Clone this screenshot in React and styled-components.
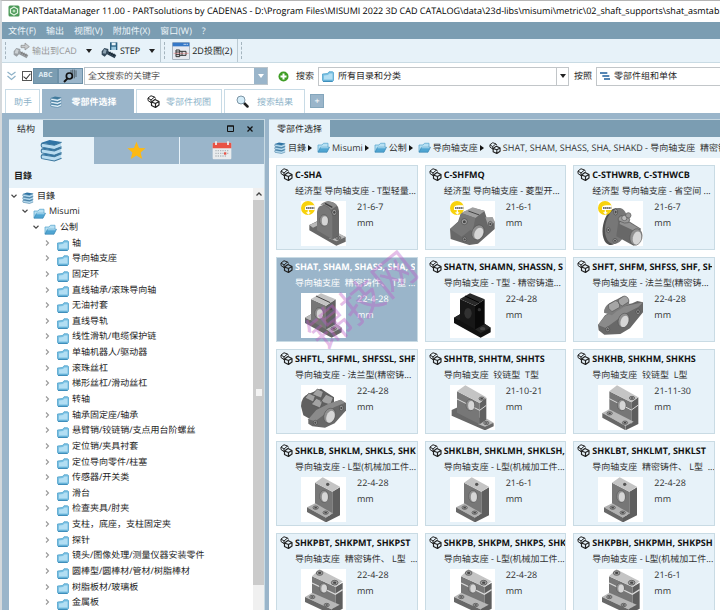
import React from 'react';
import styled, { createGlobalStyle, css } from 'styled-components';

const c = {
  bar: '#7b9db2',
  frame: '#9ab5ca',
  pale: '#e7f2f9',
  line: '#c9dbe4',
  ink: '#1d1d1d',
  tab: '#8db3c9',
};

const Global = createGlobalStyle`
  * { box-sizing: border-box; }
  html, body { margin: 0; padding: 0; overflow: hidden; }
  body { text-rendering: geometricPrecision; }
  body, button, input, select {
    font-family: "Open Sans", "Noto Sans CJK SC", sans-serif;
    font-size: 9px;
    line-height: 12px;
    color: ${c.ink};
    text-rendering: geometricPrecision;
  }
  button { border: 0; padding: 0; margin: 0; background: none; cursor: pointer; white-space: nowrap; }
  svg { display: block; flex: none; }
`;

/* ---------- icons ---------- */

const Cubes = ({ size = 13, color = '#222' }) => (
  <svg width={size} height={size} viewBox="0 0 26 26" fill="none" stroke={color} strokeWidth="2" strokeLinejoin="round">
    <path d="M9 16 L2 11 V6 L8 1.500 L15 4 L17 7 M2 6 L8 10 L15 4 M8 10 V15" />
    <path d="M16 9 L24 13 V20 L17 25 L9 21 V14 Z M9 14 L17 17 L24 13 M17 17 V25" strokeWidth="2.400" />
  </svg>
);

const Books = ({ size = 12, light = false }) => (
  <svg width={size} height={size} viewBox="0 0 24 24">
    {[12, 6, 0].map((y) => (
      <g key={y} transform={`translate(0 ${y})`}>
        <path d="M2 4.500 L15 6.500 L22 3.500 L22 8 L15 11 L2 8.500 Z" fill={light ? '#e2f0f8' : '#b9dcf0'} />
        <path d="M1.500 4 L10 1 L22.500 3 L15 6.500 Z" fill={light ? '#40799b' : '#2f74a5'} />
        <path d="M22.500 3.500 L15 6.500 L2 4.500 Q0.500 6.500 2 8.500 L15 11 L22.500 8" fill="none" stroke="#39759c" strokeWidth="1.100" />
      </g>
    ))}
  </svg>
);

const Folder = () => (
  <svg width="12" height="11" viewBox="0 0 24 22">
    <path d="M1 6 L11 5 L14 1.500 H21 L23 3 V19 L21 21 H2.500 L1 19 Z" fill="#79c1e3" stroke="#4c9fca" strokeWidth="1.500" />
    <path d="M4 9 L12 8 L15 5 H21 V17 H4 Z" fill="#b2def3" />
    <path d="M2 20.500 H21" stroke="#3284b3" strokeWidth="2" />
  </svg>
);

const OpenFolder = () => (
  <svg width="13" height="11" viewBox="0 0 26 22">
    <path d="M2 20 V6 H10 L13 2.500 H22 V10" fill="#b7e0f3" stroke="#5aa7cf" strokeWidth="1.500" />
    <path d="M2 20.500 L7 10.500 H25 L20 20.500 Z" fill="#4fa5d2" stroke="#2d7dad" strokeWidth="1.200" />
    <path d="M7 11.500 H23" stroke="#a9daf1" strokeWidth="2" fill="none" />
  </svg>
);

const Chevron = ({ open }) => (
  <svg width="6" height="6" viewBox="0 0 12 12" fill="none" strokeWidth="2.200" stroke={open ? '#444' : '#999'}>
    <path d={open ? 'M1 3.500 L6 8.500 L11 3.500' : 'M4 1 L9 6 L4 11'} />
  </svg>
);

const Caret = ({ color = '#222' }) => (
  <svg width="6" height="4" viewBox="0 0 6 4"><path d="M0 0 H6 L3 4 Z" fill={color} /></svg>
);

const CaretRight = () => (
  <svg width="4" height="6" viewBox="0 0 4 6"><path d="M0 0 L4 3 L0 6 Z" fill="#111" /></svg>
);

const AppLogo = () => (
  <svg width="12" height="12" viewBox="0 0 24 24">
    <rect x="1" y="1" width="22" height="22" rx="3" fill="#4c9a59" />
    <path d="M12 4 L19 8 V16 L12 20 L5 16 V8 Z" fill="none" stroke="#e5f4e4" strokeWidth="2.500" />
    <circle cx="12" cy="12" r="3" fill="#b9dfba" />
  </svg>
);

const Screw = ({ dark, children }) => (
  <svg width="17" height="17" viewBox="0 0 51 51">
    <path d="M2 28 L10 18 L22 21 L22 28 L46 39 L41 49 L18 37 L11 44 L2 38 Z" fill={dark ? '#34495a' : '#9a9fa3'} />
    <path d="M9 21 L17 24 L14 35 L5 34 Z" fill={dark ? '#8ba1b0' : '#ccd1d4'} />
    <path d="M22 30 L43 41 M28 29 L24 38 M34 32 L30 41 M40 35 L36 44" stroke={dark ? '#10202b' : '#777'} strokeWidth="2" />
    {children}
  </svg>
);

const ProjectionIcon = () => (
  <svg width="18" height="18" viewBox="0 0 54 54">
    <rect x="2" y="2" width="50" height="50" fill="#e6e9f0" stroke="#8b98a8" strokeWidth="2" />
    <rect x="2" y="2" width="50" height="11" fill="#3578c8" />
    <path d="M35 7 H47" stroke="#fff" strokeWidth="3" strokeDasharray="3 2" />
    <g fill="none" stroke="#333" strokeWidth="3">
      <path d="M12 24 H23 V44 H12 Z M12 30 H23 M12 38 H23 M23 28 H42 V40 H23 M30 28 V40" />
    </g>
    <path d="M5 34 H50" stroke="#d66" strokeWidth="1.500" />
  </svg>
);

const ShapeSearch = () => (
  <svg width="15" height="14" viewBox="0 0 45 42">
    <path d="M24 3 V28 M29 2 V28 M34 2 V28 M39 4 V24" stroke="#53636d" strokeWidth="3" />
    <circle cx="19" cy="21" r="9" fill="#9ab5ca" stroke="#111" strokeWidth="5" />
    <path d="M13 29 L3 39" stroke="#111" strokeWidth="6" />
  </svg>
);

const PlusBadge = () => (
  <svg width="11" height="11" viewBox="0 0 22 22">
    <circle cx="11" cy="11" r="10" fill="#3f9d25" /><path d="M11 5 V17 M5 11 H17" stroke="#fff" strokeWidth="4" />
  </svg>
);

const Magnifier = () => (
  <svg width="13" height="13" viewBox="0 0 26 26">
    <path d="M15 15 L23 23" stroke="#222" strokeWidth="5" strokeLinecap="round" />
    <circle cx="10" cy="10" r="8" fill="#d5edf9" stroke="#7d95a5" strokeWidth="2" />
  </svg>
);

const DoubleChevron = () => (
  <svg width="9" height="10" viewBox="0 0 18 20" fill="none" stroke="#8fb2c8" strokeWidth="2.500">
    <path d="M1 2 L9 8 L17 2 M1 10 L9 17 L17 10" />
  </svg>
);

const Levels = () => (
  <svg width="10" height="8" viewBox="0 0 30 24" stroke="#1f5f9c" strokeWidth="4">
    <path d="M0 3 H22 M7 12 H28 M12 21 H30" />
  </svg>
);

const Star = () => (
  <svg width="19" height="19" viewBox="0 0 24 24">
    <path d="M12 1 L15.200 8.800 L23.500 9.300 L17.200 14.600 L19.200 22.800 L12 18.300 L4.800 22.800 L6.800 14.600 L0.500 9.300 L8.800 8.800 Z" fill="#fdb913" />
  </svg>
);

const Calendar = () => (
  <svg width="20" height="19" viewBox="0 0 60 57">
    <rect x="2" y="5" width="56" height="50" rx="3" fill="#e9ecee" />
    <path d="M2 22 V8 Q2 5 5 5 H55 Q58 5 58 8 V22 Z" fill="#e85245" />
    <path d="M12 1 V12 M48 1 V12" stroke="#f1f3f4" strokeWidth="5" />
    <path d="M10 29 H51 M10 37 H51 M10 45 H45" stroke="#b4babf" strokeWidth="4" strokeDasharray="4 3" />
    <rect x="36" y="34" width="7" height="7" fill="#e85245" />
  </svg>
);

/* ---------- part drawings ---------- */

const L = '#b9b9b9';
const M = '#8a8a8a';
const D = '#686868';
const Bore = ({ x, y, rx = 13, ry = 17, r = 0 }) => (
  <g transform={`rotate(${r} ${x} ${y})`}>
    <ellipse cx={x} cy={y} rx={rx} ry={ry} fill="#8f8f8f" stroke="#4e4e4e" strokeWidth="1.500" />
    <ellipse cx={x + rx * 0.2} cy={y + ry * 0.1} rx={rx * 0.7} ry={ry * 0.8} fill="#d6d6d6" />
  </g>
);
const Dot = ({ x, y, rx = 8, ry = 5 }) => (
  <g>
    <ellipse cx={x} cy={y} rx={rx} ry={ry} fill="#a4a4a4" stroke="#454545" strokeWidth="2" />
    <ellipse cx={x} cy={y} rx={rx / 2} ry={ry / 2} fill="#484848" />
  </g>
);

const shapes = {
  round: (
    <g>
      <path d="M25 72 L48 61 L112 98 L134 108 V122 L106 134 L25 88 Z" fill={D} />
      <path d="M25 72 L48 62 L60 68 L36 80 Z M84 112 L114 97 L134 108 L106 121 Z" fill={L} />
      <path d="M62 18 Q70 2 82 1 Q112 4 114 30 V104 L94 116 L78 106 Z" fill={D} />
      <path d="M48 88 V32 Q52 9 72 14 Q93 25 94 47 V115 Z" fill="#777" />
      <path d="M58 12 Q68 1 82 1 Q100 2 108 14 L90 26 Q76 8 58 12 Z" fill={M} />
      <path d="M72 7 L94 19" stroke="#3d3d3d" strokeWidth="4" />
      <Bore x={69} y={58} /><Dot x={100} y={34} rx={7} ry={9} /><Dot x={112} y={111} />
    </g>
  ),
  tee: (dark) => (
    <g>
      <path d="M12 74 L30 64 L104 92 L122 104 V118 L92 134 L12 90 Z" fill={dark ? '#111' : '#666'} />
      <path d="M12 74 L30 64 L44 72 L27 82 Z M75 109 L104 92 L122 104 L92 120 Z" fill={dark ? '#262626' : L} />
      <path d="M30 18 L75 38 V109 L30 83 Z" fill={dark ? '#171717' : '#777'} />
      <path d="M75 38 L104 19 V93 L75 109 Z" fill={dark ? '#090909' : '#616161'} />
      <path d="M30 18 L60 1 L104 19 L75 38 Z" fill={dark ? '#292929' : '#c3c3c3'} />
      <path d="M45 9 L88 29" stroke={dark ? '#000' : '#444'} strokeWidth="3" />
      {dark ? (
        <g><ellipse cx="54" cy="61" rx="11" ry="16" fill="#313131" /><ellipse cx="98" cy="107" rx="8" ry="5" fill="#444" /><circle cx="88" cy="50" r="5" fill="#333" /></g>
      ) : (
        <g><Bore x={54} y={61} /><Dot x={98} y={107} /><circle cx="89" cy="47" r="5" fill="#4d4d4d" /></g>
      )}
    </g>
  ),
  flangeBlock: (
    <g>
      <path d="M0 84 L24 62 L33 36 L70 21 L103 29 L110 50 L134 62 V84 L84 128 L58 132 L2 114 Z" fill={D} />
      <path d="M0 84 L24 63 L62 86 L35 107 Z" fill="#777" />
      <path d="M33 36 L68 19 L104 30 L76 51 Z M106 49 L128 48 L135 64 L115 76 Z" fill="#a0a0a0" />
      <path d="M33 36 L76 51 L68 91 L25 67 Z" fill="#777" /><path d="M55 30 L88 42" stroke="#444" strokeWidth="3" />
      <Bore x={84} y={94} rx={18} ry={23} r={25} /><Dot x={43} y={62} rx={9} ry={9} /><Dot x={44} y={115} rx={6} ry={7} /><Dot x={121} y={69} rx={6} ry={8} />
    </g>
  ),
  tube: (
    <g>
      <ellipse cx="46" cy="77" rx="31" ry="56" fill="#505050" transform="rotate(12 46 77)" />
      <ellipse cx="55" cy="75" rx="33" ry="55" fill="#777" transform="rotate(12 55 75)" />
      <Dot x={53} y={33} rx={6} ry={9} /><Dot x={31} y={87} rx={5} ry={8} /><Dot x={51} y={119} rx={6} ry={7} />
      <path d="M61 61 Q68 45 86 56 L129 83 L107 134 L55 106 Z" fill={D} />
      <path d="M66 63 Q75 52 86 60 L126 84 L116 93 L65 69 Z" fill="#929292" />
      <Bore x={114} y={108} rx={18} ry={25} r={12} />
      <path d="M61 59 Q59 45 73 44 L92 49 Q99 56 91 65 L79 66 Z" fill="#999" stroke="#555" strokeWidth="2" />
      <circle cx="79" cy="51" r="8" fill="#bbb" stroke="#555" strokeWidth="2" /><circle cx="91" cy="43" r="8" fill="#999" stroke="#555" strokeWidth="2" />
    </g>
  ),
  flange: (
    <g>
      <path d="M0 96 L21 67 L66 40 L103 31 L118 24 L137 28 V55 L96 106 L67 123 L19 125 L2 112 Z" fill={D} />
      <path d="M0 96 L22 68 L67 43 L135 28 L121 42 L84 61 L23 105 Z" fill={M} />
      <path d="M18 59 Q17 42 34 31 L74 10 Q94 11 94 32 L56 55 L42 67 Z" fill="#7c7c7c" />
      <path d="M31 35 L52 23 Q66 24 65 43 L42 56 Q28 48 31 35 Z M61 20 L78 9 Q92 10 93 26 L73 39 Q59 34 61 20 Z" fill="#a5a5a5" stroke="#555" strokeWidth="2" />
      <Bore x={77} y={82} rx={16} ry={22} r={20} /><Dot x={29} y={109} rx={6} ry={7} /><Dot x={120} y={56} rx={6} ry={8} />
    </g>
  ),
  doubleFlange: (
    <g>
      <path d="M0 64 Q1 34 22 27 L60 11 L99 37 V92 L43 111 L7 91 Z" fill="#606060" />
      <g fill="#a2a2a2" stroke="#505050" strokeWidth="2">
        <path d="M12 39 L23 25 L43 32 L37 51 Z M33 29 L49 12 L67 20 L61 39 Z M31 58 L46 40 L65 49 L57 69 Z M59 50 L75 28 L97 38 L88 60 Z" />
      </g>
      <path d="M22 103 L45 76 L82 57 L119 44 L136 55 V75 L101 115 L72 128 L34 124 L22 116 Z" fill={D} />
      <path d="M22 103 L46 75 L83 56 L120 44 L132 53 L99 67 L43 109 Z" fill={M} />
      <Bore x={86} y={92} rx={17} ry={23} r={20} /><Dot x={43} y={113} rx={6} ry={7} /><Dot x={121} y={69} rx={6} ry={8} />
    </g>
  ),
  hingeTee: (
    <g>
      <path d="M5 75 L23 67 L108 107 L131 115 V124 L105 136 L5 92 Z" fill={D} />
      <path d="M84 117 L111 101 L131 113 L105 125 Z" fill={L} />
      <path d="M21 19 L89 54 V118 L21 83 Z" fill="#777" /><path d="M89 54 L109 38 V104 L89 118 Z" fill="#616161" />
      <path d="M21 19 L46 1 L109 37 L89 54 Z" fill="#c4c4c4" />
      <path d="M21 42 L89 76 L109 61" stroke="#dadada" fill="none" strokeWidth="3" />
      <Bore x={61} y={60} /><Dot x={95} y={41} /><Dot x={109} y={114} />
    </g>
  ),
  hingeL: (
    <g>
      <path d="M34 19 L100 52 V124 L34 86 Z" fill="#777" /><path d="M100 52 L121 37 V117 L84 135 V107 L100 116 Z" fill="#5e5e5e" />
      <path d="M34 19 L57 1 L121 37 L100 52 Z" fill="#c4c4c4" />
      <path d="M34 41 L100 75 L121 60" stroke="#dadada" fill="none" strokeWidth="3" />
      <path d="M13 84 L34 73 L107 110 L83 123 Z" fill={L} /><path d="M13 84 L83 123 V136 L13 98 Z" fill={D} />
      <Bore x={71} y={60} /><Dot x={102} y={39} /><Dot x={35} y={85} /><Dot x={81} y={113} />
    </g>
  ),
  ell: (
    <g>
      <path d="M42 17 L94 44 V116 L42 86 Z" fill="#777" /><path d="M94 44 L117 31 V115 L75 136 V120 L94 111 Z" fill="#5e5e5e" />
      <path d="M42 17 L65 1 L117 29 L94 44 Z" fill="#c4c4c4" />
      <path d="M18 91 L43 79 L95 109 L75 122 Z" fill="#b1b1b1" /><path d="M18 91 L75 122 V136 L18 105 Z" fill={D} />
      <Bore x={69} y={58} rx={13} ry={18} /><circle cx="80" cy="22" r="5" fill="#555" /><Dot x={44} y={92} /><Dot x={74} y={107} />
    </g>
  ),
  clamp: (
    <g>
      <path d="M33 22 L104 54 V124 L33 85 Z" fill="#777" /><path d="M104 54 L125 41 V119 L91 137 V120 L104 114 Z" fill="#5e5e5e" />
      <path d="M33 22 L55 1 L125 37 L104 54 Z" fill="#c4c4c4" />
      <path d="M33 42 L103 76 L125 62" stroke="#dadada" fill="none" strokeWidth="4" />
      <path d="M12 84 L34 71 L116 107 L91 121 Z" fill="#b7b7b7" /><path d="M12 84 L91 121 V136 L12 99 Z" fill={D} />
      <Bore x={67} y={57} rx={12} ry={15} /><Dot x={56} y={12} rx={10} ry={7} /><Dot x={101} y={41} rx={10} ry={7} /><Dot x={34} y={84} /><Dot x={77} y={108} />
    </g>
  ),
};

const PartPicture = ({ kind, economy }) => (
  <svg width="45" height="45" viewBox="0 0 135 135">
    <rect width="135" height="135" fill="#fff" />
    {kind === 'tee' ? shapes.tee(false) : kind === 'darkTee' ? shapes.tee(true) : shapes[kind]}
    {economy && (
      <g>
        <circle cx="21" cy="21" r="21" fill="#f8d20c" />
        <path d="M12 21 Q12 13 25 13 H41 V27 H12 Z" fill="#fff" />
        <path d="M15 21 H40" stroke="#777" strokeWidth="6" strokeDasharray="5 1" />
        <path d="M20 28 V34 H15 L22 41 L29 34 H24 V28 Z" fill="#fff" />
      </g>
    )}
  </svg>
);

/* ---------- window chrome ---------- */

const Window = styled.div`
  display: flex;
  flex-direction: column;
  height: 100vh;
  background: #fff;
  border-top: 1px solid #b5b5b5;
  border-left: 2px solid #d5d9dc;
  overflow: hidden;
`;

const TitleBar = styled.header`
  display: flex;
  align-items: center;
  gap: 2px;
  height: 21px;
  padding: 0 0 2px 6px;
  flex: none;
  h1 { margin: 0; font-size: 9px; line-height: 14px; font-weight: 400; color: #000; white-space: nowrap; }
`;

const MenuBar = styled.nav`
  display: flex;
  align-items: center;
  gap: 10px;
  height: 17px;
  padding-left: 6px;
  flex: none;
  background: ${c.bar};
`;

const MenuItem = styled.button`
  color: #eef6fa;
`;

const ToolBar = styled.div`
  display: flex;
  align-items: center;
  height: 24px;
  flex: none;
  background: ${c.pale};
  border-bottom: 1px solid ${c.line};
`;

const ToolGroup = styled.div`
  display: flex;
  align-items: center;
  gap: 9px;
  height: 100%;
  padding: 0 5px 0 11px;
  border-right: ${(p) => (p.$open ? 0 : 1)}px solid #bac9d2;
  position: relative;
  &::before {
    content: '';
    position: absolute;
    left: 3px;
    top: 3px;
    bottom: 3px;
    border-left: 1px dashed #a5b5bf;
  }
`;

const Tool = styled.button`
  display: flex;
  align-items: center;
  gap: 2px;
  color: ${(p) => (p.disabled ? '#999' : c.ink)};
`;

const SearchBar = styled.form`
  display: flex;
  align-items: center;
  height: 26px;
  flex: none;
  padding-left: 5px;
`;

const Check = styled.input`
  appearance: none;
  width: 10px;
  height: 10px;
  margin: 0 1px 0 6px;
  border: 1px solid #555;
  background: #fff;
  position: relative;
  &:checked::after {
    content: '';
    position: absolute;
    left: 2px;
    top: 0;
    width: 3px;
    height: 6px;
    border: solid #333;
    border-width: 0 1px 1px 0;
    transform: rotate(40deg);
  }
`;

const Mode = styled.button`
  display: flex;
  align-items: center;
  justify-content: center;
  width: 25px;
  height: 16px;
  font-size: 7px;
  font-weight: 700;
  color: #e2eef5;
  background: ${(p) => (p.$on ? c.bar : c.frame)};
  border: 1px solid #6d91a8;
`;

const QueryBox = styled.div`
  display: flex;
  width: 184px;
  height: 18px;
  margin: 0 10px 0 1px;
  border: 1px solid #bbc4ca;
  input { flex: 1; min-width: 0; border: 0; padding: 0 3px; outline: 0; }
  input::placeholder { color: #555; opacity: 1; }
  button { display: flex; width: 13px; align-items: center; justify-content: center; background: ${c.frame}; }
`;

const Picker = styled.div`
  display: flex;
  align-items: center;
  gap: 4px;
  height: 19px;
  margin-left: 4px;
  padding-left: 3px;
  border: 1px solid #c2c6c9;
  flex: ${(p) => p.$grow} 1 0;
  min-width: 0;
  margin-right: ${(p) => (p.$last ? '-4px' : '0')};
  select { flex: 1; min-width: 0; height: 100%; appearance: none; border: 0; padding: 0; background: none; outline: 0; }
`;

const PickerArrow = styled.span`
  display: flex;
  align-items: center;
  justify-content: center;
  width: 12px;
  height: 100%;
  border-left: 1px solid #c2c6c9;
`;

const Label = styled.label`
  white-space: nowrap;
  margin-left: ${(p) => p.$gap || 0}px;
`;

const ViewTabs = styled.div`
  display: flex;
  align-items: center;
  gap: 2px;
  height: 24px;
  padding-left: 3px;
  flex: none;
`;

const ViewTab = styled.button`
  display: flex;
  align-items: center;
  justify-content: space-between;
  width: ${(p) => p.$w}px;
  height: 24px;
  padding: 0 ${(p) => p.$pad}px;
  color: ${(p) => (p.$on ? '#fff' : c.tab)};
  background: ${(p) => (p.$on ? c.frame : '#fff')};
  border: 1px solid ${(p) => (p.$on ? c.frame : '#c8dbe6')};
  border-bottom: 0;
`;

const AddTab = styled.button`
  width: 14px;
  height: 14px;
  margin-left: 3px;
  color: #fff;
  background: ${c.frame};
  border: 1px solid #84a6bc;
`;

const Body = styled.main`
  display: flex;
  flex: 1;
  min-height: 0;
  gap: 4px;
  padding: 6px 0 0 7px;
  background: ${c.frame};
`;

const Panel = styled.section`
  display: flex;
  flex-direction: column;
  min-width: 0;
  min-height: 0;
  background: #fff;
  ${(p) => (p.$side ? css`flex: 0 0 256px; border-right: 1px solid ${c.line};` : css`flex: 1;`)}
`;

const PanelHead = styled.div`
  display: flex;
  align-items: center;
  height: 18px;
  flex: none;
  padding-right: 4px;
  background: ${c.bar};
  border-top: 1px solid #c6d7e1;
  h2 {
    display: flex;
    align-items: center;
    height: 100%;
    margin: 0 auto 0 0;
    padding: 0 8px;
    background: ${c.pale};
    font-size: 9px;
    font-weight: 400;
    white-space: nowrap;
  }
  button { width: 20px; display: flex; justify-content: center; }
`;

const SideTabs = styled.div`
  display: grid;
  grid-template-columns: repeat(3, 1fr);
  gap: 1px;
  height: 27px;
  flex: none;
  background: ${c.pale};
`;

const SideTab = styled.button`
  display: flex;
  align-items: center;
  justify-content: center;
  background: ${(p) => (p.$on ? c.pale : c.frame)};
`;

const SideTitle = styled.h3`
  display: flex;
  align-items: center;
  height: 24px;
  margin: 0;
  padding-left: 5px;
  flex: none;
  font-size: 9px;
  background: ${c.pale};
`;

const TreeArea = styled.div`
  display: flex;
  flex: 1;
  min-height: 0;
`;

const Tree = styled.ul`
  display: grid;
  grid-auto-rows: minmax(15px, 1fr);
  flex: 1;
  min-width: 0;
  margin: 0;
  padding: 0;
  list-style: none;
`;

const TreeRow = styled.li`
  display: flex;
  align-items: center;
  gap: 3px;
  padding-left: ${(p) => 2 + p.$depth * 11}px;
  white-space: nowrap;
  svg:first-child { margin-right: ${(p) => (p.$depth > 2 ? 4 : 2)}px; }
  svg:nth-child(2) { align-self: end; }
`;

const Scroll = styled.div`
  display: grid;
  grid-template-rows: 12px 1fr 25px;
  width: 11px;
  background: #f0f0f0;
`;

const ScrollUp = styled.button`
  display: flex;
  align-items: center;
  justify-content: center;
`;

const Thumb = styled.div`
  display: flex;
  align-items: center;
  justify-content: center;
  background: #cbcbcb;
  &::after { content: ''; width: 6px; height: 7px; background: #f3f3f3; }
`;

const Crumbs = styled.nav`
  display: flex;
  align-items: center;
  height: 21px;
  flex: none;
  gap: 5px;
  padding-left: 5px;
  background: ${c.pale};
  overflow: hidden;
`;

const Crumb = styled.a`
  display: flex;
  align-items: center;
  gap: 2px;
  color: #333;
  text-decoration: none;
  white-space: pre;
  flex: none;
`;

const Cards = styled.div`
  position: relative;
  display: grid;
  grid-template-columns: repeat(auto-fill, minmax(136px, 1fr));
  grid-auto-rows: 85px;
  align-content: start;
  gap: 7px;
  flex: 1;
  min-height: 0;
  padding: 7px 5px 0 7px;
  overflow: hidden;
`;

const Card = styled.article`
  display: grid;
  grid-template-columns: 15px 1fr;
  grid-template-rows: 15px 19px 45px;
  padding: 1px 2px 1px 3px;
  overflow: hidden;
  color: ${(p) => (p.$on ? '#fff' : '#333')};
  background: ${(p) => (p.$on ? c.frame : c.pale)};
  border: 1px solid ${c.line};
  > svg { align-self: center; }
  h4 {
    margin: 0;
    overflow: hidden;
    font-size: 9px;
    line-height: 15px;
    white-space: nowrap;
    color: ${(p) => (p.$on ? '#fff' : '#111')};
  }
  p { grid-column: 2; margin: 0; line-height: 17px; white-space: pre; }
`;

const CardBody = styled.div`
  display: flex;
  gap: 11px;
  grid-column: 2;
  padding-left: 6px;
`;

const Facts = styled.dl`
  margin: 0;
  dd { margin: 0 0 4px; line-height: 12px; }
`;

const Watermark = styled.div`
  position: absolute;
  left: 30px;
  top: 118px;
  font-size: 42px;
  font-weight: 400;
  line-height: 50px;
  color: rgba(190, 95, 200, 0.42);
  transform: rotate(-39deg);
  white-space: nowrap;
  pointer-events: none;
`;

const folders = [
  '轴', '导向轴支座', '固定环', '直线轴承/滚珠导向轴', '无油衬套', '直线导轨', '线性滑轨/电缆保护链',
  '单轴机器人/驱动器', '滚珠丝杠', '梯形丝杠/滑动丝杠', '转轴', '轴承固定座/轴承', '悬臂销/铰链销/支点用台阶螺丝',
  '定位销/夹具衬套', '定位导向零件/柱塞', '传感器/开关类', '滑台', '检查夹具/肘夹', '支柱，底座，支柱固定夹',
  '探针', '镜头/图像处理/测量仪器安装零件', '圆棒型/圆棒材/管材/树脂棒材', '树脂板材/玻璃板', '金属板',
];

const parts = [
  ['C-SHA', '经济型 导向轴支座 - T型轻量...', '21-6-7', 'round', true],
  ['C-SHFMQ', '经济型 导向轴支座 - 菱型开...', '21-6-1', 'flangeBlock', true],
  ['C-STHWRB, C-STHWCB', '经济型 导向轴支座 - 省空间 ...', '21-6-7', 'tube', true],
  ['SHAT, SHAM, SHASS, SHA, SHAKD', '导向轴支座  精密铸件、 T型 ...', '22-4-28', 'tee'],
  ['SHATN, SHAMN, SHASSN, SHAN', '导向轴支座 - T型 - 精密铸造...', '22-4-28', 'darkTee'],
  ['SHFT, SHFM, SHFSS, SHF, SHFKD', '导向轴支座 - 法兰型(精密铸...', '22-4-28', 'flange'],
  ['SHFTL, SHFML, SHFSSL, SHFL', '导向轴支座 - 法兰型(精密铸...', '22-4-28', 'doubleFlange'],
  ['SHHTB, SHHTM, SHHTS', '导向轴支座  铰链型  T型', '21-10-21', 'hingeTee'],
  ['SHKHB, SHKHM, SHKHS', '导向轴支座  铰链型  L型', '21-11-30', 'hingeL'],
  ['SHKLB, SHKLM, SHKLS, SHKL', '导向轴支座 - L型(机械加工件...', '22-4-28', 'ell'],
  ['SHKLBH, SHKLMH, SHKLSH, SHKLH', '导向轴支座 - L型(机械加工件...', '21-6-1', 'ell'],
  ['SHKLBT, SHKLMT, SHKLST', '导向轴支座  精密铸件、 L型  ...', '22-4-28', 'ell'],
  ['SHKPBT, SHKPMT, SHKPST', '导向轴支座  精密铸件、 L型  ...', '22-4-28', 'clamp'],
  ['SHKPB, SHKPM, SHKPS, SHKP', '导向轴支座 - L型(机械加工件...', '22-4-28', 'clamp'],
  ['SHKPBH, SHKPMH, SHKPSH', '导向轴支座 - L型(机械加工件...', '21-6-1', 'clamp'],
];

export default function App() {
  return (
    <Window>
      <Global />
      <TitleBar>
        <AppLogo />
        <h1>PARTdataManager 11.00 - PARTsolutions by CADENAS - D:\Program Files\MISUMI 2022 3D CAD CATALOG\data\23d-libs\misumi\metric\02_shaft_supports\shat_asmtab.p</h1>
      </TitleBar>
      <MenuBar>
        {['文件(F)', '输出', '视图(V)', '附加件(X)', '窗口(W)', '?'].map((m) => <MenuItem key={m}>{m}</MenuItem>)}
      </MenuBar>
      <ToolBar>
        <ToolGroup>
          <Tool disabled>
            <Screw><path d="M24 10 H36 V3 L49 14 L36 24 V17 H24 Z" fill="#c7cacc" stroke="#888" strokeWidth="2" /></Screw>
            输出到CAD
          </Tool>
          <Caret />
          <Tool>
            <Screw dark>
              <rect x="27" y="1" width="22" height="23" fill="#286083" />
              <rect x="32" y="2" width="12" height="8" fill="#e9f4fa" /><rect x="31" y="14" width="14" height="10" fill="#9bc8df" />
            </Screw>
            STEP
          </Tool>
          <Caret />
        </ToolGroup>
        <ToolGroup><Tool><ProjectionIcon />2D投图(2)</Tool></ToolGroup>
        <ToolGroup $open />
      </ToolBar>
      <SearchBar onSubmit={(e) => e.preventDefault()}>
        <DoubleChevron />
        <Check type="checkbox" defaultChecked aria-label="全文搜索" />
        <Mode type="button" $on>ABC</Mode>
        <Mode type="button" aria-label="几何搜索"><ShapeSearch /></Mode>
        <QueryBox>
          <input aria-label="全文搜索的关键字" placeholder="全文搜索的关键字" />
          <button type="button" aria-label="历史"><Caret color="#fff" /></button>
        </QueryBox>
        <PlusBadge />
        <Label htmlFor="scope" $gap={7}>搜索</Label>
        <Picker $grow={2}>
          <Folder />
          <select id="scope"><option>所有目录和分类</option></select>
          <PickerArrow><Caret /></PickerArrow>
        </Picker>
        <Label htmlFor="by" $gap={5}>按照</Label>
        <Picker $grow={1} $last>
          <Levels />
          <select id="by"><option>零部件组和单体</option></select>
        </Picker>
      </SearchBar>
      <ViewTabs>
        <ViewTab $w={35} $pad={8}>助手</ViewTab>
        <ViewTab $w={92} $pad={7} $on><Books light /><b>零部件选择</b><span /></ViewTab>
        <ViewTab $w={86} $pad={10}><Cubes />零部件视图</ViewTab>
        <ViewTab $w={81} $pad={11}><Magnifier />搜索结果</ViewTab>
        <AddTab aria-label="添加标签">+</AddTab>
      </ViewTabs>
      <Body>
        <Panel $side>
          <PanelHead>
            <h2>结构</h2>
            <button aria-label="最大化"><svg width="7" height="7" viewBox="0 0 7 7"><path d="M0.500 1 H6.500 V6.500 H0.500 Z M0 1 H7" fill="none" stroke="#111" /></svg></button>
            <button aria-label="关闭"><svg width="6" height="6" viewBox="0 0 6 6"><path d="M0.500 0.500 L5.500 5.500 M5.500 0.500 L0.500 5.500" stroke="#111" strokeWidth="1.300" /></svg></button>
          </PanelHead>
          <SideTabs>
            <SideTab $on aria-label="目錄"><Books size={23} /></SideTab>
            <SideTab aria-label="收藏"><Star /></SideTab>
            <SideTab aria-label="历史记录"><Calendar /></SideTab>
          </SideTabs>
          <SideTitle>目錄</SideTitle>
          <TreeArea>
            <Tree>
              <TreeRow $depth={0}><Chevron open /><Books />目錄</TreeRow>
              <TreeRow $depth={1}><Chevron open /><OpenFolder />Misumi</TreeRow>
              <TreeRow $depth={2}><Chevron open /><OpenFolder />公制</TreeRow>
              {folders.map((f) => <TreeRow key={f} $depth={3}><Chevron /><Folder />{f}</TreeRow>)}
            </Tree>
            <Scroll>
              <ScrollUp aria-label="向上滚动"><svg width="6" height="4" viewBox="0 0 6 4"><path d="M0.500 3.500 L3 1 L5.500 3.500" fill="none" stroke="#444" strokeWidth="1.300" /></svg></ScrollUp>
              <Thumb />
            </Scroll>
          </TreeArea>
        </Panel>
        <Panel>
          <PanelHead><h2>零部件选择</h2></PanelHead>
          <Crumbs>
            <Crumb href="#root"><Books />目錄<CaretRight /></Crumb>
            <Crumb href="#misumi"><OpenFolder />Misumi<CaretRight /></Crumb>
            <Crumb href="#metric"><OpenFolder />公制<CaretRight /></Crumb>
            <Crumb href="#supports"><OpenFolder />导向轴支座<CaretRight /></Crumb>
            <Crumb href="#shat"><Cubes size={12} />SHAT, SHAM, SHASS, SHA, SHAKD - 导向轴支座  精密铸</Crumb>
          </Crumbs>
          <Cards>
            {parts.map(([name, text, date, kind, economy]) => (
              <Card key={name} $on={kind === 'tee'}>
                <Cubes />
                <h4>{name}</h4>
                <p>{text}</p>
                <CardBody>
                  <PartPicture kind={kind} economy={economy} />
                  <Facts><dd>{date}</dd><dd>mm</dd></Facts>
                </CardBody>
              </Card>
            ))}
            <Watermark>锦技网</Watermark>
          </Cards>
        </Panel>
      </Body>
    </Window>
  );
}
